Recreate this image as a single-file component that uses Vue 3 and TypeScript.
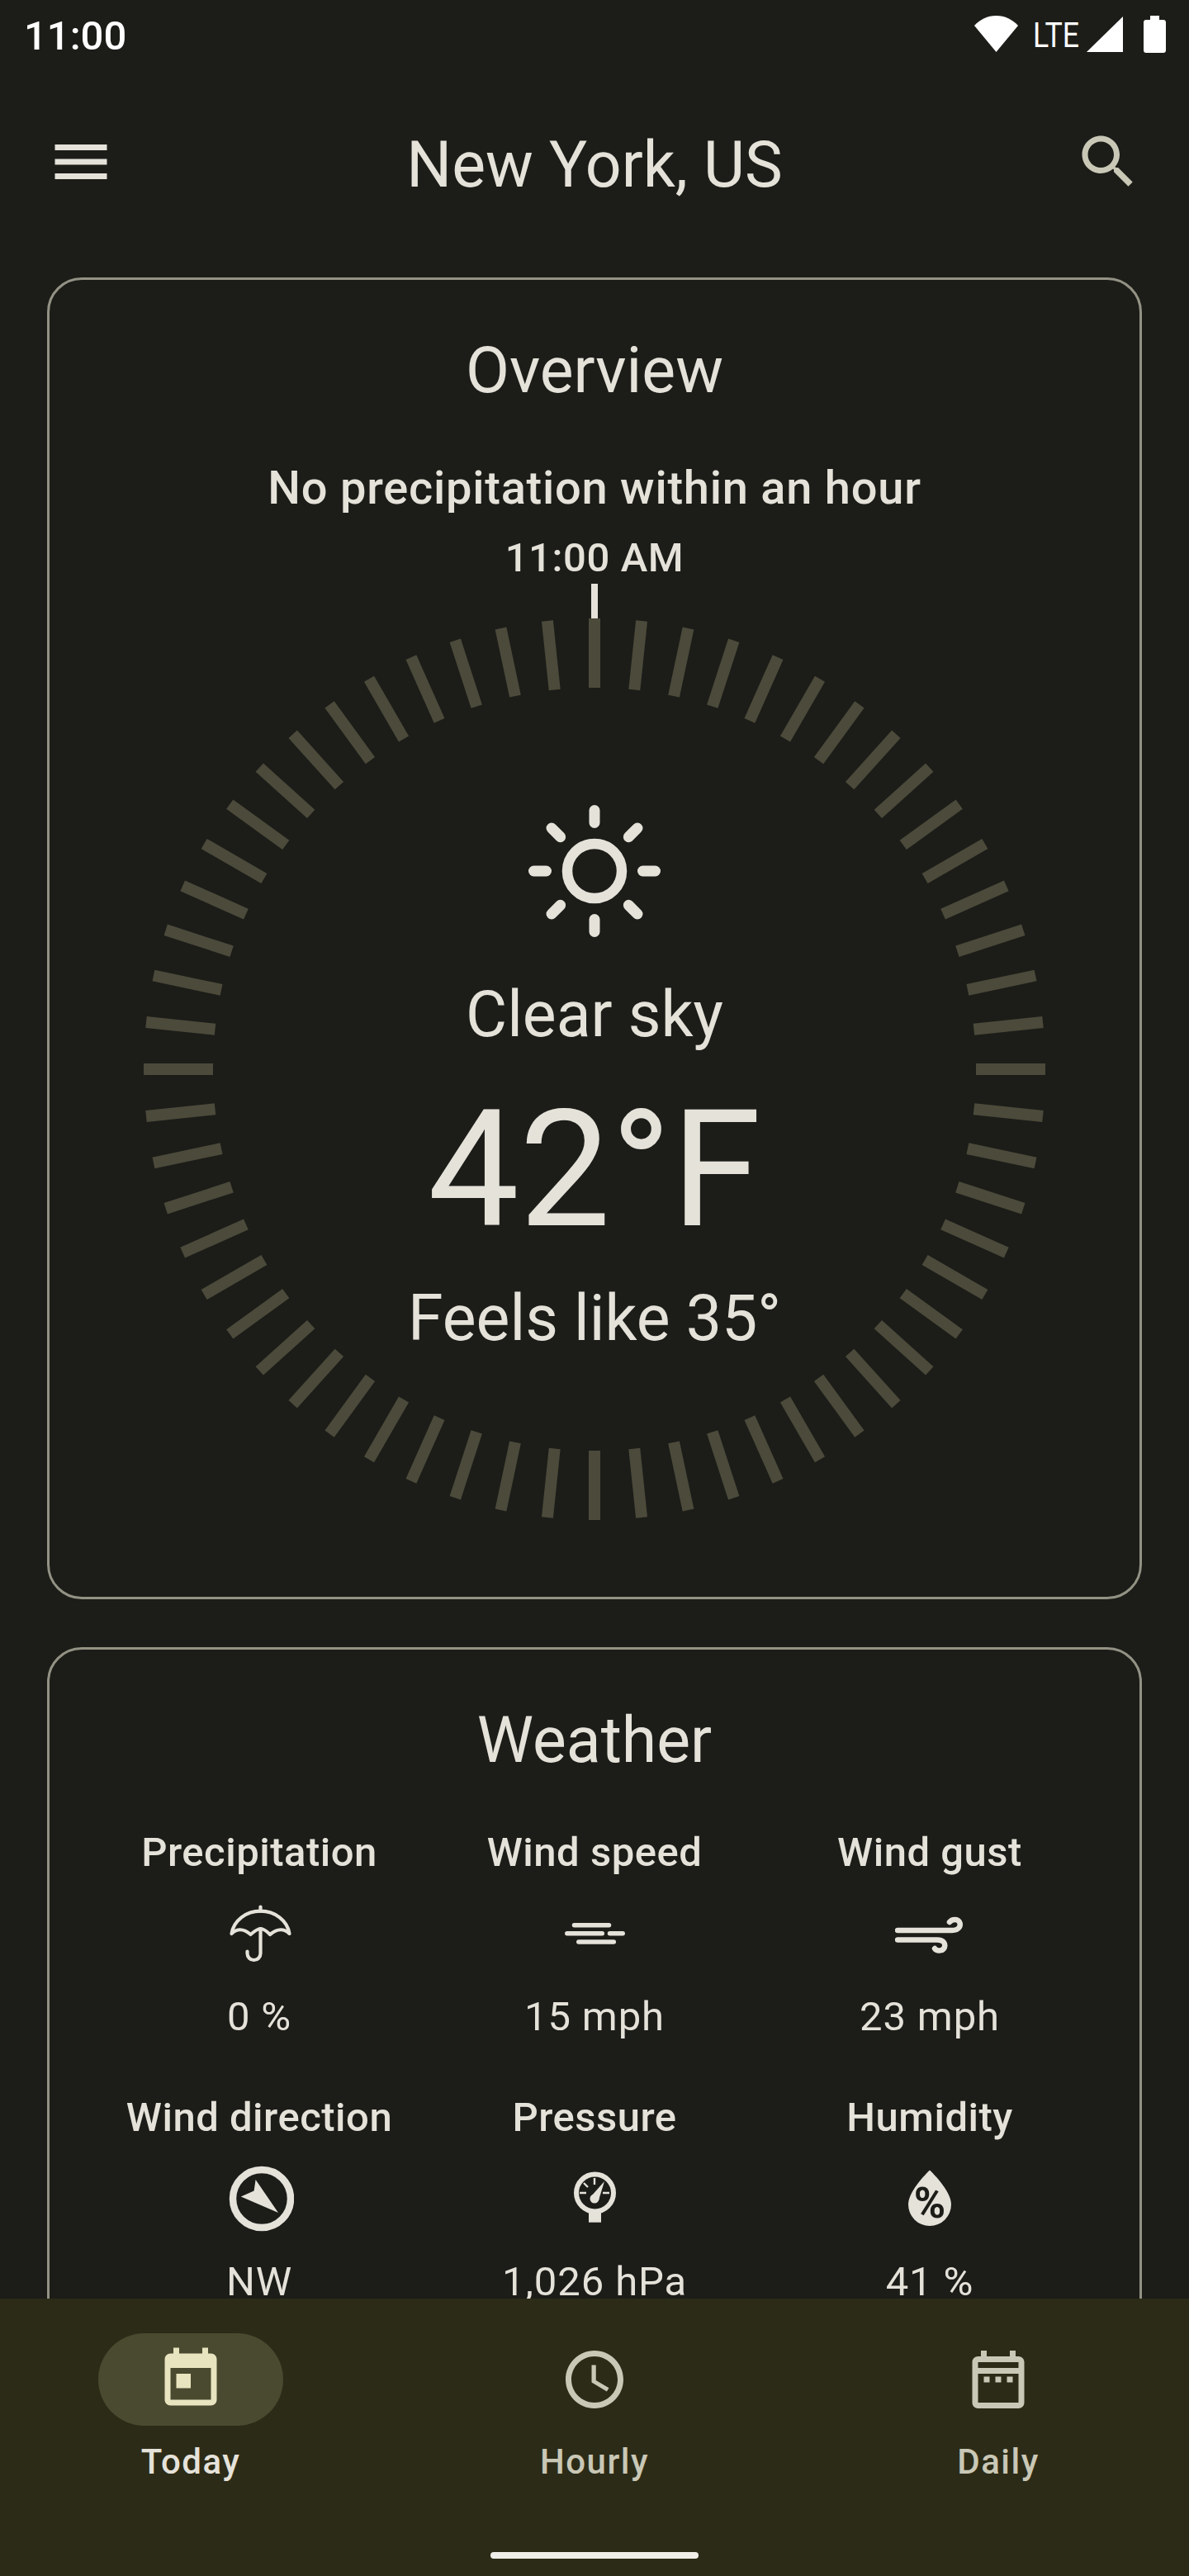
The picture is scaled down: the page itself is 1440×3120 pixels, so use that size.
<script setup lang="ts">
type Metric = { label: string; value: string; icon: string };

const metrics: Metric[] = [
  { label: 'Precipitation', value: '0 %', icon: 'umbrella' },
  { label: 'Wind speed', value: '15 mph', icon: 'speed' },
  { label: 'Wind gust', value: '23 mph', icon: 'gust' },
  { label: 'Wind direction', value: 'NW', icon: 'compass' },
  { label: 'Pressure', value: '1,026 hPa', icon: 'gauge' },
  { label: 'Humidity', value: '41 %', icon: 'humidity' },
];

const ticks = Array.from({ length: 60 }, (_, i) => i * 6);
const rays = [0, 45, 90, 135, 180, 225, 270, 315];
</script>

<template>
  <div class="screen">
    <div class="status">
      <span class="clock">11:00</span>
      <div class="status-icons">
        <svg class="wifi" width="53" height="44" viewBox="0 0 53 44">
          <path d="M26.5 44 0 12C7 4.500 16 0 26.500 0S46 4.500 53 12z" fill="#fff" />
        </svg>
        <svg class="lte" width="56" height="44" viewBox="0 0 56 44">
          <text x="0" y="38" textLength="56" lengthAdjust="spacingAndGlyphs">LTE</text>
        </svg>
        <svg class="signal" width="44" height="44" viewBox="0 0 44 44">
          <path d="M0 43 44 0v43z" fill="#fff" />
        </svg>
        <svg class="battery" width="27" height="45" viewBox="0 0 27 45">
          <path d="M8 0h11v5h5c1.700 0 3 1.300 3 3v34c0 1.700-1.300 3-3 3H3c-1.700 0-3-1.300-3-3V8c0-1.700 1.300-3 3-3h5z" fill="#fff" />
        </svg>
      </div>
    </div>

    <header class="topbar">
      <svg class="icon" width="84" height="84" viewBox="0 0 24 24" fill="#e5e2da">
        <path d="M3 18h18v-2H3v2zm0-5h18v-2H3v2zm0-7v2h18V6H3z" />
      </svg>
      <h1>New York, US</h1>
      <svg class="icon" width="84" height="84" viewBox="0 0 24 24" fill="#c9c7b6">
        <path d="M15.500 14h-.79l-.28-.27C15.410 12.590 16 11.110 16 9.500 16 5.910 13.090 3 9.500 3S3 5.910 3 9.500 5.910 16 9.500 16c1.610 0 3.090-.59 4.230-1.570l.27.28v.79l5 4.990L20.490 19l-4.990-5zm-6 0C7.010 14 5 11.990 5 9.500S7.010 5 9.500 5 14 7.010 14 9.500 11.990 14 9.500 14z" />
      </svg>
    </header>

    <main class="content">
      <section class="card overview">
        <h2>Overview</h2>
        <p class="sub">No precipitation within an hour</p>
        <p class="time">11:00 AM</p>
        <div class="marker"></div>
        <div class="gauge">
          <svg class="ticks" width="1092" height="1092" viewBox="0 0 1092 1092">
            <rect
              v-for="deg in ticks"
              :key="deg"
              x="539"
              y="0"
              width="14"
              height="84"
              fill="#4b4a3b"
              :transform="`rotate(${deg} 546 546)`"
            />
          </svg>
          <svg class="sun" width="168" height="168" viewBox="-84 -84 168 168" fill="none" stroke="#e5e2da">
            <circle r="33" stroke-width="12.500" />
            <line
              v-for="deg in rays"
              :key="deg"
              x1="0"
              y1="-73.500"
              x2="0"
              y2="-58.500"
              stroke-width="13"
              stroke-linecap="round"
              :transform="`rotate(${deg})`"
            />
          </svg>
          <p class="sky">Clear sky</p>
          <p class="temp">42°F</p>
          <p class="feels">Feels like 35°</p>
        </div>
      </section>

      <section class="card weather">
        <h2>Weather</h2>
        <div class="grid">
          <div v-for="m in metrics" :key="m.label" class="metric">
            <span class="label">{{ m.label }}</span>
            <svg class="metric-icon" width="84" height="84" viewBox="0 0 84 84">
              <g v-if="m.icon === 'umbrella'" transform="translate(2 0)" fill="none" stroke="#e5e2da" stroke-width="4.200" stroke-linecap="round" stroke-linejoin="round">
                <path d="M41.500 9.500v5.200" />
                <path d="M6.500 42C9 26 24 14.700 41.500 14.700S74 26 76.500 42C70 36 63 35 53 43 50 40 45 36 41.500 36 38 36 33 40 29.500 43 20 35 13 36 6.500 42z" />
                <path d="M41.500 36v30a8 8 0 0 1-16 0v-2.500" />
              </g>
              <g v-else-if="m.icon === 'speed'" fill="none" stroke="#e5e2da" stroke-width="5.500" stroke-linecap="round">
                <path d="M17.500 31.700h42M8.800 41.700h42.500M60.500 41.700h15.700M22.800 52h42.500" />
              </g>
              <g v-else-if="m.icon === 'gust'" fill="none" stroke="#e5e2da" stroke-width="6.500" stroke-linecap="round">
                <path d="M3 38h66c9 0 11-6 9-10-2-4-9-4-12 0" />
                <path d="M3 49.500h48c8 0 10 4.500 9 8.500-1 5-9 6-12 2" />
              </g>
              <g v-else-if="m.icon === 'compass'" transform="translate(1 0)">
                <circle cx="44" cy="42" r="35" fill="none" stroke="#e5e2da" stroke-width="8.500" />
                <path d="M36.600 19 64 59 18.800 39.400l15.800-6.900z" fill="#e5e2da" />
              </g>
              <g v-else-if="m.icon === 'gauge'">
                <circle cx="42.500" cy="35" r="22.500" fill="none" stroke="#e5e2da" stroke-width="6" />
                <path d="M35 56h15v14.700H35z" fill="#e5e2da" />
                <path d="M42 17v8M24 35h8M52 35h8M29 23l5 5" fill="none" stroke="#e5e2da" stroke-width="2.400" />
                <path d="M54 21 47 44 38 39z" fill="#e5e2da" />
                <circle cx="42" cy="42" r="5.500" fill="#e5e2da" />
              </g>
              <g v-else>
                <path d="M42 7.600C42 7.600 16 32 16 49a26 26 0 0 0 52 0C68 32 42 7.600 42 7.600z" fill="#e5e2da" />
                <text x="42" y="65" class="drop-text" text-anchor="middle">%</text>
              </g>
            </svg>
            <span class="value">{{ m.value }}</span>
          </div>
        </div>
      </section>
    </main>

    <nav class="nav">
      <div class="tabs">
        <div class="tab active">
          <div class="pill">
            <svg width="84" height="84" viewBox="0 0 24 24" fill="#e8e4bf">
              <path d="M19 3h-1V1h-2v2H8V1H6v2H5c-1.110 0-1.990.9-1.990 2L3 19c0 1.100.89 2 2 2h14c1.100 0 2-.9 2-2V5c0-1.100-.9-2-2-2zm0 16H5V8h14v11zM7 10h5v5H7z" />
            </svg>
          </div>
          <span>Today</span>
        </div>
        <div class="tab">
          <div class="pill">
            <svg width="84" height="84" viewBox="0 0 24 24" fill="#c9c7b6">
              <path d="M11.990 2C6.470 2 2 6.480 2 12s4.470 10 9.990 10C17.520 22 22 17.520 22 12S17.520 2 11.990 2zM12 20c-4.420 0-8-3.580-8-8s3.580-8 8-8 8 3.580 8 8-3.580 8-8 8zm.5-13H11v6l5.250 3.150.75-1.230-4.500-2.670z" />
            </svg>
          </div>
          <span>Hourly</span>
        </div>
        <div class="tab">
          <div class="pill">
            <svg width="84" height="84" viewBox="0 0 24 24" fill="#c9c7b6" fill-rule="evenodd">
              <path d="M19 4h-1V2h-2v2H8V2H6v2H5c-1.100 0-2 .9-2 2v14c0 1.100.9 2 2 2h14c1.100 0 2-.9 2-2V6c0-1.100-.9-2-2-2zm0 16H5V10h14v10zM5 8V6h14v2H5zm2 3h2v2H7zm4 0h2v2h-2zm4 0h2v2h-2z" />
            </svg>
          </div>
          <span>Daily</span>
        </div>
      </div>
      <div class="home"></div>
    </nav>
  </div>
</template>

<style scoped>
.screen {
  width: 1440px;
  height: 3120px;
  display: flex;
  flex-direction: column;
  overflow: hidden;
  background: #1c1d18;
  color: #e5e2da;
  font-family: Roboto, sans-serif;
}

.status {
  height: 88px;
  flex: none;
  display: flex;
  justify-content: space-between;
  padding: 0 28px 0 29px;
  color: #fff;
}

.clock {
  font-size: 49px;
  font-weight: 500;
  line-height: 88px;
}

.status-icons {
  display: flex;
  align-items: flex-start;
  padding-top: 19px;
}

.status-icons svg {
  display: block;
  overflow: visible;
}

.lte {
  margin-left: 18px;
}

.lte text {
  font-family: Roboto, sans-serif;
  font-size: 42px;
  fill: #fff;
}

.signal {
  margin: 1px 0 0 9px;
}

.battery {
  margin-left: 25px;
}

.topbar {
  height: 216px;
  flex: none;
  display: flex;
  align-items: center;
  justify-content: space-between;
  padding: 0 56px;
}

.topbar h1 {
  margin: 7px 0 0;
  font-size: 77px;
  font-weight: 400;
  line-height: 100px;
}

.icon {
  display: block;
}

.content {
  flex: 1;
  min-height: 0;
  overflow: hidden;
  padding: 32px 57px 0;
  display: flex;
  flex-direction: column;
  gap: 58px;
}

.card {
  flex: none;
  border: 3.500px solid #939284;
  border-radius: 42px;
  padding-top: 59.500px;
}

.card h2 {
  margin: 0;
  font-size: 77px;
  font-weight: 400;
  line-height: 100px;
  text-align: center;
}

.overview {
  padding-bottom: 93.500px;
  display: flex;
  flex-direction: column;
  align-items: center;
}

.sub {
  margin: 57px 0 0;
  font-size: 56px;
  font-weight: 500;
  line-height: 70px;
  letter-spacing: 0.750px;
}

.time {
  margin: 20.500px 0 0;
  font-size: 49px;
  font-weight: 500;
  line-height: 60px;
  letter-spacing: 0.600px;
}

.marker {
  width: 8px;
  height: 42px;
  margin-top: 0.500px;
  background: #e5e2da;
}

.gauge {
  position: relative;
  width: 1092px;
  height: 1092px;
  display: flex;
  flex-direction: column;
  align-items: center;
  padding-top: 222px;
  box-sizing: border-box;
}

.ticks {
  position: absolute;
  left: 0;
  top: 0;
}

.sun {
  display: block;
  position: relative;
}

.gauge p {
  position: relative;
  margin: 0;
}

.gauge .sky {
  margin-top: 40px;
  font-size: 77px;
  line-height: 100px;
}

.gauge .temp {
  margin-top: 18px;
  font-size: 197px;
  line-height: 240px;
}

.gauge .feels {
  margin-top: 10px;
  font-size: 77px;
  line-height: 100px;
}

.grid {
  display: grid;
  grid-template-columns: repeat(3, 406px);
  justify-content: center;
  row-gap: 52px;
  margin-top: 51px;
  padding-bottom: 60px;
}

.metric {
  display: flex;
  flex-direction: column;
  align-items: center;
}

.label {
  font-size: 49px;
  font-weight: 500;
  line-height: 70px;
  letter-spacing: 0.500px;
}

.metric-icon {
  display: block;
  margin-top: 21px;
}

.value {
  margin-top: 24px;
  font-size: 49px;
  line-height: 70px;
  letter-spacing: 0.875px;
}

.drop-text {
  font-family: Roboto, sans-serif;
  font-size: 52px;
  font-weight: 700;
  fill: #1c1d18;
}

.nav {
  height: 336px;
  flex: none;
  background: #2c2b17;
  display: flex;
  flex-direction: column;
  align-items: center;
}

.tabs {
  width: 100%;
  box-sizing: border-box;
  display: flex;
  justify-content: space-between;
  padding: 42px 119px 0 119px;
}

.tab {
  width: 224px;
  display: flex;
  flex-direction: column;
  align-items: center;
  color: #c9c7b6;
  font-size: 42px;
  font-weight: 500;
  line-height: 50px;
  letter-spacing: 1.500px;
}

.tab.active {
  color: #e5e2da;
}

.pill {
  width: 224px;
  height: 112px;
  margin-bottom: 19px;
  border-radius: 56px;
  display: flex;
  align-items: center;
  justify-content: center;
}

.tab.active .pill {
  background: #4a4a30;
}

.home {
  width: 252px;
  height: 8px;
  margin-top: 84px;
  border-radius: 4px;
  background: #f0eee8;
}
</style>

<style>
html,
body {
  margin: 0;
  background: #1c1d18;
}
</style>
